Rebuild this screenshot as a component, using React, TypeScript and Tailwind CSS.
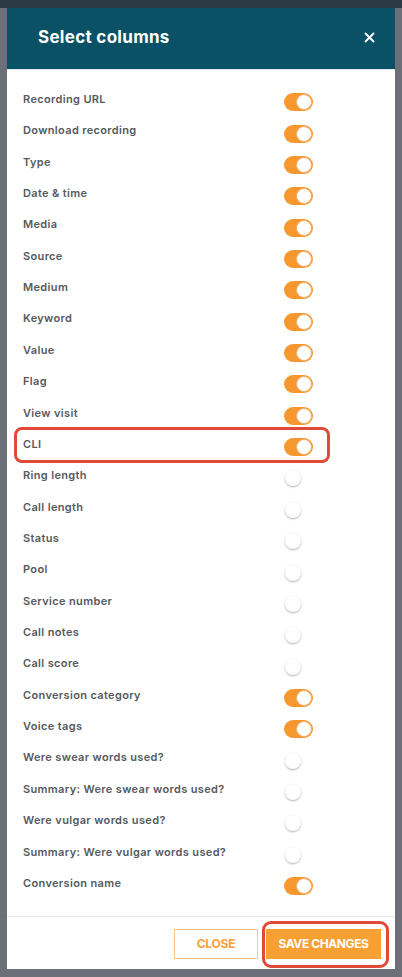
import React from "react";

const rows: [string, boolean][] = [
  ["Recording URL", true],
  ["Download recording", true],
  ["Type", true],
  ["Date & time", true],
  ["Media", true],
  ["Source", true],
  ["Medium", true],
  ["Keyword", true],
  ["Value", true],
  ["Flag", true],
  ["View visit", true],
  ["CLI", true],
  ["Ring length", false],
  ["Call length", false],
  ["Status", false],
  ["Pool", false],
  ["Service number", false],
  ["Call notes", false],
  ["Call score", false],
  ["Conversion category", true],
  ["Voice tags", true],
  ["Were swear words used?", false],
  ["Summary: Were swear words used?", false],
  ["Were vulgar words used?", false],
  ["Summary: Were vulgar words used?", false],
  ["Conversion name", true],
];

function Toggle({ on }: { on: boolean }) {
  if (on) {
    return (
      <div className="w-[29px] h-[18px] rounded-full bg-[#f7982f] flex items-center justify-end pr-[1px]">
        <div className="w-[16px] h-[16px] rounded-full bg-white border border-[#f0b070]" />
      </div>
    );
  }
  return (
    <div className="w-[29px] h-[18px] flex items-center pl-[1px]">
      <div className="w-[16px] h-[16px] rounded-full bg-white shadow-[0_1px_2px_rgba(0,0,0,0.3)]" />
    </div>
  );
}

export default function App() {
  return (
    <div
      className="w-[402px] h-[977px] bg-[#6c6f77] relative overflow-hidden"
      style={{ fontFamily: "Inter, 'Open Sans', sans-serif" }}
    >
      <div className="h-[8px] bg-[#2c3a46]" />
      <div className="px-[7px]">
        <div className="bg-white w-[388px] flex flex-col relative">
          <div className="h-[62px] bg-[#0b5165] flex items-center justify-between pl-[31px] pr-[20px] border-b border-[#dfe5ea]">
            <span className="text-white font-bold text-[17px] tracking-[0.3px] mt-[-1px]">Select columns</span>
            <svg width="11" height="11" viewBox="0 0 11 11" className="mt-[-2px]">
              <path d="M1.5 1.5 L9.5 9.5 M9.5 1.5 L1.5 9.5" stroke="white" strokeWidth="1.9" strokeLinecap="round" />
            </svg>
          </div>
          <div className="pt-[15px] pb-[16px] pl-[16px]">
            {rows.map(([label, on]) => (
              <div key={label} className="h-[31.36px] flex items-center">
                <span className="w-[261px] text-[11px] font-semibold text-[#555a5e] tracking-[0.35px] mb-[3px]">{label}</span>
                <div className="mt-[3px]">
                  <Toggle on={on} />
                </div>
              </div>
            ))}
          </div>
          <div className="border-t border-[#e3e8ec] h-[53px] flex items-start justify-end gap-[8px] pr-[14px] pt-[12px]">
            <button className="w-[84px] h-[30px] border border-[#fbc78a] text-[#f7a03c] font-bold text-[12px] tracking-[-0.2px]">
              CLOSE
            </button>
            <button className="w-[115px] h-[30px] bg-[#f9a033] text-white font-bold text-[12px] tracking-[-0.4px]">
              SAVE CHANGES
            </button>
          </div>
          <div className="absolute left-[7px] top-[419px] w-[316px] h-[36px] rounded-[8px] border-[3px] border-[#e04a38] pointer-events-none" />
          <div className="absolute left-[255px] top-[913px] w-[127px] h-[47px] rounded-[9px] border-[3px] border-[#e04a38] pointer-events-none" />
        </div>
      </div>
    </div>
  );
}
